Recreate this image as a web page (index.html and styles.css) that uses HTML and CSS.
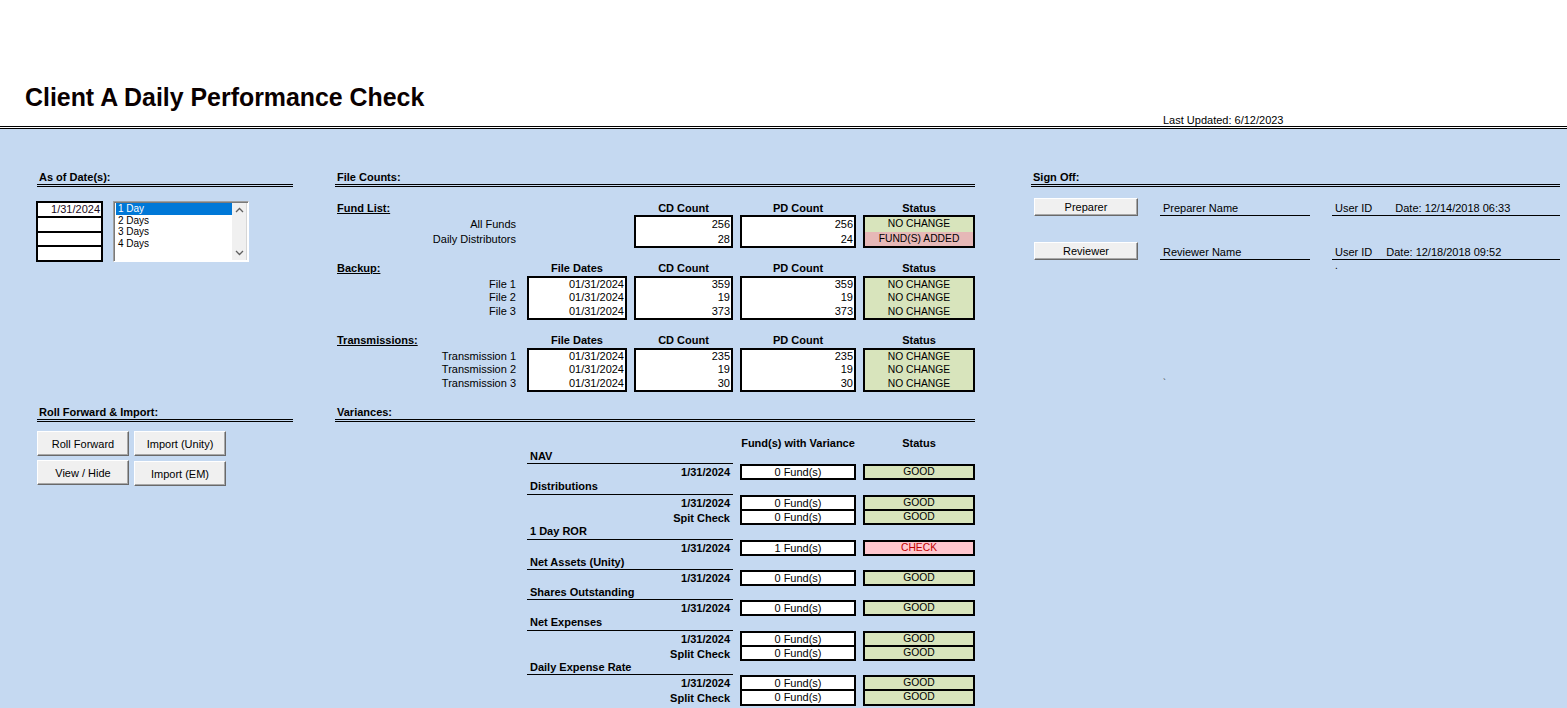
FILE: index.html
```html
<!DOCTYPE html>
<html lang="en">
<head>
<meta charset="utf-8">
<title>Client A Daily Performance Check</title>
<link rel="stylesheet" href="styles.css">
</head>
<body>
<header class="top">
  <h1 class="title">Client A Daily Performance Check</h1>
  <div class="updated">Last Updated: 6/12/2023</div>
</header>

<main class="sheet">
  <!-- Row 1, left -->
  <section class="col-left">
    <div class="sec-title">As of Date(s):</div>
    <div class="asof">
      <div class="dates">
        <div class="d">1/31/2024</div>
        <div class="d"></div>
        <div class="d"></div>
        <div class="d"></div>
      </div>
      <div class="listbox">
        <ul class="items">
          <li class="sel">1 Day</li>
          <li>2 Days</li>
          <li>3 Days</li>
          <li>4 Days</li>
        </ul>
        <div class="scroll">
          <svg class="arr" width="9" height="6" viewBox="0 0 9 6"><path d="M1 5 L4.5 1.5 L8 5" fill="none" stroke="#606060" stroke-width="1.3"/></svg>
          <svg class="arr" width="9" height="6" viewBox="0 0 9 6"><path d="M1 1 L4.5 4.5 L8 1" fill="none" stroke="#606060" stroke-width="1.3"/></svg>
        </div>
      </div>
    </div>
  </section>

  <!-- Row 1, middle -->
  <section class="col-mid">
    <div class="sec-title">File Counts:</div>

    <div class="fc-block first">
      <div class="fc-sect">Fund List:</div>
      <div class="fc-hdr"></div>
      <div class="fc-hdr">CD Count</div>
      <div class="fc-hdr">PD Count</div>
      <div class="fc-hdr">Status</div>

      <div class="labels">
        <div class="r">All Funds</div>
        <div class="r">Daily Distributors</div>
      </div>
      <div></div>
      <div class="box num">
        <div class="r">256</div>
        <div class="r">28</div>
      </div>
      <div class="box num">
        <div class="r">256</div>
        <div class="r">24</div>
      </div>
      <div class="box status">
        <div class="r green">NO CHANGE</div>
        <div class="r pink">FUND(S) ADDED</div>
      </div>
    </div>

    <div class="fc-block tight">
      <div class="fc-sect">Backup:</div>
      <div class="fc-hdr">File Dates</div>
      <div class="fc-hdr">CD Count</div>
      <div class="fc-hdr">PD Count</div>
      <div class="fc-hdr">Status</div>

      <div class="labels">
        <div class="r">File 1</div>
        <div class="r">File 2</div>
        <div class="r">File 3</div>
      </div>
      <div class="box num">
        <div class="r">01/31/2024</div>
        <div class="r">01/31/2024</div>
        <div class="r">01/31/2024</div>
      </div>
      <div class="box num">
        <div class="r">359</div>
        <div class="r">19</div>
        <div class="r">373</div>
      </div>
      <div class="box num">
        <div class="r">359</div>
        <div class="r">19</div>
        <div class="r">373</div>
      </div>
      <div class="box status">
        <div class="r green">NO CHANGE</div>
        <div class="r green">NO CHANGE</div>
        <div class="r green">NO CHANGE</div>
      </div>
    </div>

    <div class="fc-block tight">
      <div class="fc-sect">Transmissions:</div>
      <div class="fc-hdr">File Dates</div>
      <div class="fc-hdr">CD Count</div>
      <div class="fc-hdr">PD Count</div>
      <div class="fc-hdr">Status</div>

      <div class="labels">
        <div class="r">Transmission 1</div>
        <div class="r">Transmission 2</div>
        <div class="r">Transmission 3</div>
      </div>
      <div class="box num">
        <div class="r">01/31/2024</div>
        <div class="r">01/31/2024</div>
        <div class="r">01/31/2024</div>
      </div>
      <div class="box num">
        <div class="r">235</div>
        <div class="r">19</div>
        <div class="r">30</div>
      </div>
      <div class="box num">
        <div class="r">235</div>
        <div class="r">19</div>
        <div class="r">30</div>
      </div>
      <div class="box status">
        <div class="r green">NO CHANGE</div>
        <div class="r green">NO CHANGE</div>
        <div class="r green">NO CHANGE</div>
      </div>
    </div>
  </section>

  <!-- Right column (spans both rows) -->
  <section class="col-right">
    <div class="sec-title">Sign Off:</div>
    <div class="so-row">
      <button class="btn so-btn" type="button">Preparer</button>
      <div class="so-field">Preparer Name</div>
      <div class="so-id"><span>User ID</span><span class="so-date p">Date: 12/14/2018 06:33</span></div>
    </div>
    <div class="so-row second">
      <button class="btn so-btn" type="button">Reviewer</button>
      <div class="so-field">Reviewer Name</div>
      <div class="so-id"><span>User ID</span><span class="so-date r">Date: 12/18/2018 09:52</span></div>
    </div>
    <div class="so-dot">.</div>
    <div class="so-tick">`</div>
  </section>

  <!-- Row 2, left -->
  <section class="col-left row2">
    <div class="sec-title">Roll Forward &amp; Import:</div>
    <div class="btn-grid">
      <button class="btn" type="button">Roll Forward</button>
      <button class="btn" type="button">Import (Unity)</button>
      <button class="btn" type="button">View / Hide</button>
      <button class="btn low" type="button">Import (EM)</button>
    </div>
  </section>

  <!-- Row 2, middle -->
  <section class="col-mid row2">
    <div class="sec-title">Variances:</div>
    <div class="var">
      <div class="var-hdr">
        <div></div>
        <div>Fund(s) with Variance</div>
        <div>Status</div>
      </div>

      <div class="vgroup">
        <div class="vhead">NAV</div>
        <div class="vbody">
          <div class="vlabels"><div class="l">1/31/2024</div></div>
          <div class="vbox fund"><div class="c">0 Fund(s)</div></div>
          <div class="vbox vstat"><div class="c green">GOOD</div></div>
        </div>
      </div>

      <div class="vgroup">
        <div class="vhead">Distributions</div>
        <div class="vbody">
          <div class="vlabels"><div class="l">1/31/2024</div><div class="l">Spit Check</div></div>
          <div class="vbox fund"><div class="c">0 Fund(s)</div><div class="c">0 Fund(s)</div></div>
          <div class="vbox vstat"><div class="c green">GOOD</div><div class="c green">GOOD</div></div>
        </div>
      </div>

      <div class="vgroup">
        <div class="vhead">1 Day ROR</div>
        <div class="vbody">
          <div class="vlabels"><div class="l">1/31/2024</div></div>
          <div class="vbox fund"><div class="c">1 Fund(s)</div></div>
          <div class="vbox vstat"><div class="c bad">CHECK</div></div>
        </div>
      </div>

      <div class="vgroup">
        <div class="vhead">Net Assets (Unity)</div>
        <div class="vbody">
          <div class="vlabels"><div class="l">1/31/2024</div></div>
          <div class="vbox fund"><div class="c">0 Fund(s)</div></div>
          <div class="vbox vstat"><div class="c green">GOOD</div></div>
        </div>
      </div>

      <div class="vgroup">
        <div class="vhead">Shares Outstanding</div>
        <div class="vbody">
          <div class="vlabels"><div class="l">1/31/2024</div></div>
          <div class="vbox fund"><div class="c">0 Fund(s)</div></div>
          <div class="vbox vstat"><div class="c green">GOOD</div></div>
        </div>
      </div>

      <div class="vgroup">
        <div class="vhead">Net Expenses</div>
        <div class="vbody">
          <div class="vlabels"><div class="l">1/31/2024</div><div class="l">Split Check</div></div>
          <div class="vbox fund"><div class="c">0 Fund(s)</div><div class="c">0 Fund(s)</div></div>
          <div class="vbox vstat"><div class="c green">GOOD</div><div class="c green">GOOD</div></div>
        </div>
      </div>

      <div class="vgroup">
        <div class="vhead">Daily Expense Rate</div>
        <div class="vbody">
          <div class="vlabels"><div class="l">1/31/2024</div><div class="l">Split Check</div></div>
          <div class="vbox fund"><div class="c">0 Fund(s)</div><div class="c">0 Fund(s)</div></div>
          <div class="vbox vstat"><div class="c green">GOOD</div><div class="c green">GOOD</div></div>
        </div>
      </div>
    </div>
  </section>
</main>
</body>
</html>
```

FILE: styles.css
```css
html, body {
  margin: 0;
  padding: 0;
  overflow: hidden;
}
body {
  font-family: "Liberation Sans", Arial, sans-serif;
  font-size: 11px;
  color: #000;
  background: #fff;
}

/* ---------- header ---------- */
.top {
  height: 126px;
  border-bottom: 3px double #000;
}
.title {
  margin: 0;
  padding: 83px 0 0 25px;
  font-size: 24.9px;
  line-height: 28px;
  font-weight: bold;
  color: #0a0000;
}
.updated {
  margin-top: 3px;
  padding-left: 1163px;
  line-height: 12px;
  font-size: 11px;
}

/* ---------- sheet ---------- */
.sheet {
  background: #C5D9F1;
  height: 579px;
  box-sizing: border-box;
  padding: 41px 0 0 37px;
  display: grid;
  grid-template-columns: 256px 640px 543px;
  grid-template-rows: 235px auto;
  column-gap: 42px;
}
.col-left { grid-column: 1; grid-row: 1; }
.col-mid { grid-column: 2; grid-row: 1; }
.col-right { grid-column: 3; grid-row: 1 / span 2; padding-left: 14px; }
.col-left.row2 { grid-row: 2; }
.col-mid.row2 { grid-row: 2; }

.sec-title {
  font-weight: bold;
  line-height: 14px;
  padding-left: 2px;
  border-bottom: 3px double #000;
}

/* ---------- as of dates ---------- */
.asof {
  display: flex;
  gap: 10px;
  margin: 14px 0 0 -1px;
  align-items: flex-start;
}
.dates {
  width: 67px;
  border: 2px solid #000;
  background: #fff;
  box-sizing: border-box;
}
.dates .d {
  height: 12.75px;
  line-height: 13px;
  text-align: right;
  padding-right: 1px;
  color: #1a0a1a;
}
.dates .d + .d { border-top: 2px solid #000; }

.listbox {
  width: 136px;
  height: 61px;
  box-sizing: border-box;
  border: 1px solid;
  border-color: #a0a0a0 #ffffff #ffffff #a0a0a0;
  box-shadow: inset 1px 1px 0 #7a7a7a;
  background: #fff;
  display: flex;
  padding: 1px 1px 1px 2px;
}
.items {
  flex: 1;
  list-style: none;
  margin: 0;
  padding: 0;
  font-size: 10px;
}
.items li {
  height: 11.5px;
  line-height: 11.5px;
  padding-left: 2px;
}
.items li.sel {
  background: #0078D7;
  color: #fff;
}
.scroll {
  width: 15px;
  background: #f0f0f0;
  display: flex;
  flex-direction: column;
  justify-content: space-between;
  align-items: center;
  padding: 4px 0 4px;
  box-sizing: border-box;
  border-right: 1px solid #d6d6d6;
}
.arr { display: block; }

/* ---------- buttons ---------- */
.btn {
  font-family: "Liberation Sans", Arial, sans-serif;
  font-size: 11px;
  color: #000;
  background: #F0F0F0;
  border: 1px solid;
  border-color: #ffffff #696969 #696969 #ffffff;
  box-shadow: inset -1px -1px 0 #a8a8a8;
  padding: 0;
  margin: 0;
  box-sizing: border-box;
  display: flex;
  align-items: center;
  justify-content: center;
}
.btn-grid {
  display: grid;
  grid-template-columns: 92px 92px;
  grid-auto-rows: 25px;
  column-gap: 5px;
  row-gap: 4px;
  margin-top: 9px;
}
.btn-grid .btn { height: 25px; }
.btn-grid .btn.low { margin-top: 1px; }

/* ---------- file counts ---------- */
.fc-block {
  display: grid;
  grid-template-columns: 185px 100px 99px 116px 112px;
  column-gap: 7px;
  margin-top: 14px;
}
.fc-block.first { margin-top: 15px; }
.fc-hdr {
  font-weight: bold;
  text-align: center;
  line-height: 13.5px;
}
.fc-block.first .fc-hdr { line-height: 13px; }
.fc-sect {
  font-weight: bold;
  text-decoration: underline;
  padding-left: 2px;
  line-height: 13px;
}
.labels {
  text-align: right;
  padding: 2px 4px 0 0;
}
.box {
  border: 2px solid #000;
  background: #fff;
}
.fc-block .r {
  height: 14.5px;
  line-height: 14.5px;
}
.fc-block.tight .r {
  height: 13.5px;
  line-height: 13.5px;
}
.box.num .r {
  text-align: right;
  padding-right: 1px;
}
.box.status .r {
  text-align: center;
  font-size: 10.3px;
}
.green { background: #D8E4BC; }
.pink { background: #E6B8B7; }

/* ---------- variances ---------- */
.var {
  margin: 14px 0 0 192px;
  width: 448px;
}
.var-hdr {
  display: grid;
  grid-template-columns: 206px 116px 112px;
  column-gap: 7px;
  line-height: 14px;
  font-weight: bold;
  text-align: center;
}
.vhead {
  width: 206px;
  box-sizing: border-box;
  height: 14.35px;
  line-height: 13px;
  border-bottom: 1px solid #000;
  font-weight: bold;
  padding-left: 3px;
}
.vbody {
  display: grid;
  grid-template-columns: 206px 116px 112px;
  column-gap: 7px;
}
.vlabels {
  text-align: right;
  font-weight: bold;
  padding: 2px 3px 0 0;
}
.vlabels .l {
  height: 12.5px;
  line-height: 12.5px;
}
.vlabels .l + .l { margin-top: 2.5px; }
.vbox {
  border: 2px solid #000;
  background: #fff;
}
.vbox .c {
  height: 12px;
  line-height: 12.5px;
  text-align: center;
}
.vbox .c + .c {
  border-top: 2px solid #000;
  height: 12.5px;
}
.vbox.vstat .c { font-size: 10.3px; }
.vbox .c.bad {
  background: #FFC7CE;
  color: #C00000;
}

/* ---------- sign off ---------- */
.so-row {
  display: flex;
  align-items: flex-end;
  margin-top: 11px;
}
.so-row.second { margin-top: 26px; }
.so-btn {
  width: 104px;
  height: 18px;
  margin-left: 3px;
}
.so-field {
  margin-left: 22px;
  width: 150px;
  box-sizing: border-box;
  border-bottom: 1px solid #000;
  line-height: 14px;
  padding-left: 3px;
}
.so-id {
  margin-left: 22px;
  width: 228px;
  box-sizing: border-box;
  border-bottom: 1px solid #000;
  line-height: 14px;
  padding-left: 3px;
  display: flex;
}
.so-date.p { margin-left: 23px; }
.so-date.r { margin-left: 14px; }
.so-dot {
  margin: 0 0 0 304px;
  line-height: 11px;
  font-size: 10px;
}
.so-tick {
  margin: 106px 0 0 132px;
  line-height: 10px;
  font-size: 9px;
  color: #333;
}
```
